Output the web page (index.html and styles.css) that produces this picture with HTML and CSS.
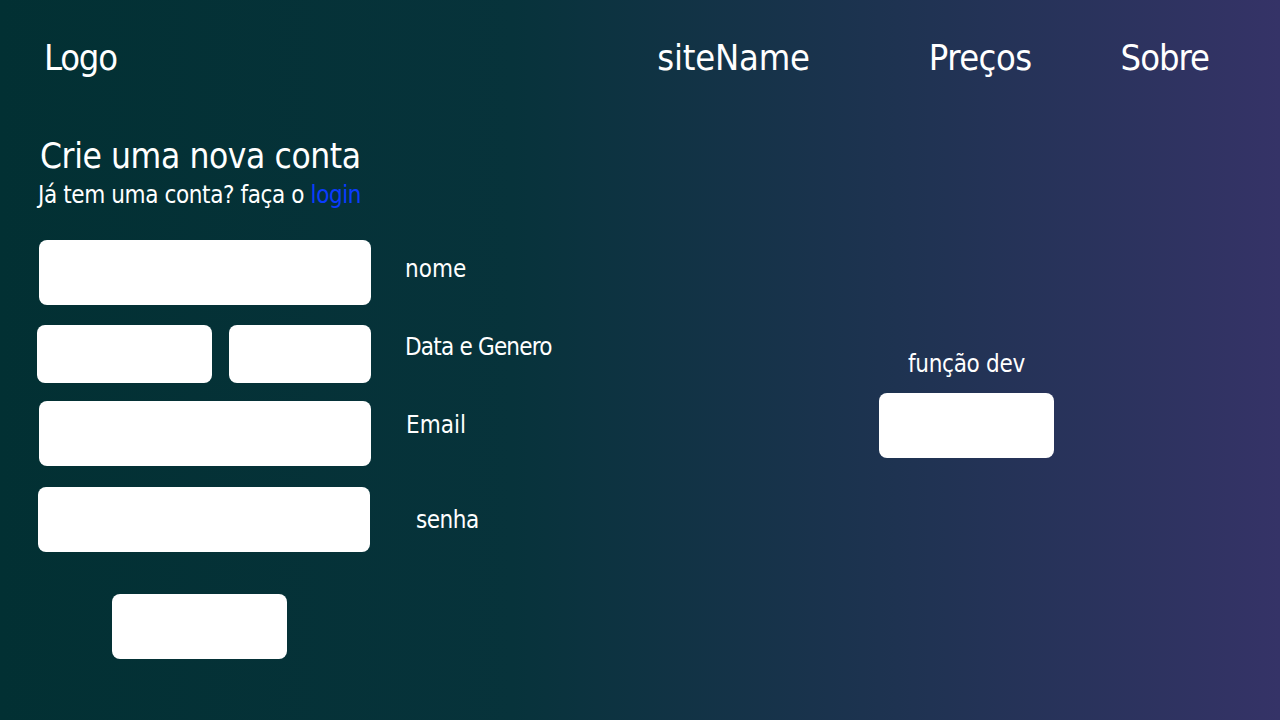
FILE: index.html
```html
<!DOCTYPE html>
<html lang="pt-BR">
<head>
<meta charset="utf-8">
<title>Crie uma nova conta</title>
<link rel="stylesheet" href="styles.css">
</head>
<body>
<div class="page">
  <header class="header">
    <div class="logo">Logo</div>
    <nav class="nav">
      <a class="nav-item site-name">siteName</a>
      <a class="nav-item prices">Preços</a>
      <a class="nav-item about">Sobre</a>
    </nav>
  </header>
  <main class="main">
    <section class="signup">
      <h1 class="title">Crie uma nova conta</h1>
      <p class="subtitle">Já tem uma conta? faça o <a class="login" href="#">login</a></p>
      <form class="form">
        <div class="row row-name">
          <div class="field field-full"></div>
          <label class="label">nome</label>
        </div>
        <div class="row row-date">
          <div class="pair">
            <div class="field field-date"></div>
            <div class="field field-gender"></div>
          </div>
          <label class="label label-date">Data e Genero</label>
        </div>
        <div class="row row-email">
          <div class="field field-full"></div>
          <label class="label label-email">Email</label>
        </div>
        <div class="row row-pass">
          <div class="field field-full field-pass"></div>
          <label class="label label-pass">senha</label>
        </div>
        <div class="submit-wrap">
          <div class="field submit"></div>
        </div>
      </form>
    </section>
    <aside class="dev">
      <div class="dev-label">função dev</div>
      <div class="field dev-box"></div>
    </aside>
  </main>
</div>
</body>
</html>
```

FILE: styles.css
```css
* { box-sizing: border-box; }
html, body { margin: 0; padding: 0; }
body {
  width: 1280px;
  height: 720px;
  overflow: hidden;
  background: linear-gradient(90deg, #023033 0%, #07333b 40%, #353367 100%);
  color: #ffffff;
  font-family: "DejaVu Sans Condensed", "Open Sans", sans-serif;
  font-stretch: 75%;
}
.page { height: 720px; }

.header {
  display: flex;
  align-items: center;
  height: 114px;
  padding: 0 71px 0 44px;
}
.logo { font-size: 36px; letter-spacing: -1.2px; }
.nav { margin-left: auto; display: flex; align-items: center; }
.nav-item { font-size: 36px; color: #fff; text-decoration: none; }
.site-name { margin-right: 119px; letter-spacing: -0.2px; }
.prices { margin-right: 89px; letter-spacing: -0.5px; }
.about { letter-spacing: -1px; }

.main { display: flex; }
.signup { width: 600px; padding-left: 37px; }
.title {
  margin: 20px 0 0 3px;
  font-size: 35px;
  font-weight: normal;
  line-height: 44px;
  letter-spacing: -0.4px;
}
.subtitle {
  margin: 2px 0 0 1px;
  font-size: 24px;
  line-height: 30px;
  letter-spacing: -0.4px;
}
.login { color: #0a3cff; text-decoration: none; }

.form { margin-top: 30px; display: flex; flex-direction: column; }
.row { display: flex; align-items: center; }
.field { background: #ffffff; border-radius: 8px; }
.field-full { width: 332px; height: 65px; margin-left: 2px; }
.field-pass { margin-left: 1px; }
.pair { display: flex; gap: 17px; }
.field-date { width: 175px; height: 58px; }
.field-gender { width: 142px; height: 58px; }
.label { font-size: 24px; margin-left: 34px; }
.row-name .label { margin-top: -8px; }
.label-date { margin-left: 34px; margin-top: -15px; letter-spacing: -0.8px; }
.label-email { margin-left: 35px; margin-top: -18px; }
.label-pass { margin-left: 46px; margin-top: 0; letter-spacing: -0.5px; }
.row-date { margin-top: 20px; }
.row-email { margin-top: 18px; }
.row-pass { margin-top: 21px; }
.submit-wrap { margin-top: 42px; padding-left: 75px; }
.submit { width: 175px; height: 65px; }

.dev {
  margin-left: 279px;
  margin-top: 235px;
  width: 175px;
  display: flex;
  flex-direction: column;
  align-items: center;
}
.dev-label { font-size: 24px; line-height: 30px; letter-spacing: -0.3px; }
.dev-box { width: 175px; height: 65px; margin-top: 14px; }
```
